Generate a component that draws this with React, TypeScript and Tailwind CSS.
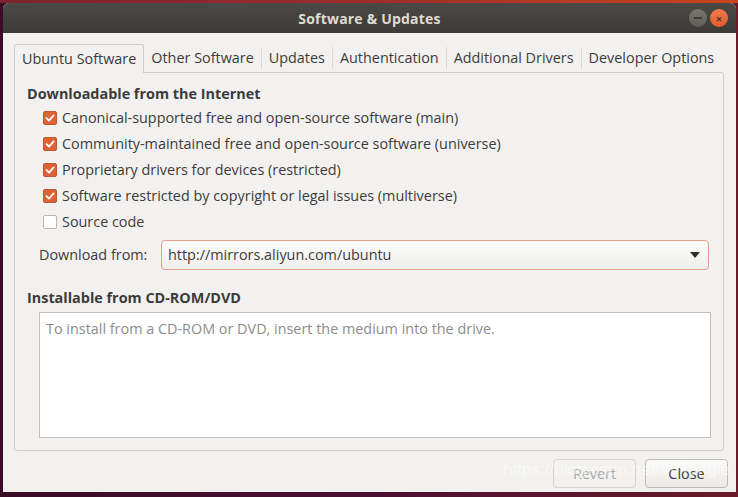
const sources = [
  { label: 'Canonical-supported free and open-source software (main)', checked: true },
  { label: 'Community-maintained free and open-source software (universe)', checked: true },
  { label: 'Proprietary drivers for devices (restricted)', checked: true },
  { label: 'Software restricted by copyright or legal issues (multiverse)', checked: true },
  { label: 'Source code', checked: false },
];

const tabs = ['Ubuntu Software', 'Other Software', 'Updates', 'Authentication', 'Additional Drivers', 'Developer Options'];

function Check({ checked }: { checked: boolean }) {
  if (!checked) {
    return <span className="w-[14px] h-[14px] rounded-[2px] border border-[#b9b6b0] bg-white shrink-0" />;
  }
  return (
    <span className="w-[14px] h-[14px] rounded-[2px] bg-[#dd6235] border border-[#c4562c] flex items-center justify-center shrink-0">
      <svg width="10" height="10" viewBox="0 0 10 10">
        <path d="M1.5 5.2 L4 7.6 L8.6 2.4" fill="none" stroke="white" strokeWidth="1.8" strokeLinecap="round" strokeLinejoin="round" />
      </svg>
    </span>
  );
}

export default function App() {
  return (
    <div
      className="w-[738px] h-[497px] overflow-hidden bg-gradient-to-r from-[#3a0d26] via-[#4a1030] to-[#6b1a2a] flex flex-col"
      style={{ fontFamily: '"Open Sans", "Noto Sans", sans-serif' }}
    >
      <div className="h-[3px] bg-gradient-to-r from-[#7a2230] via-[#a02c28] to-[#c8451f] shrink-0" />
      <div className="ml-[3px] w-[733px] h-[489px] flex flex-col bg-[#f2f1f0] rounded-t-[6px] overflow-hidden relative">
        {/* Title bar */}
        <div className="h-[30px] shrink-0 bg-gradient-to-b from-[#4a4945] to-[#3c3b37] flex items-center justify-center relative">
          <span className="text-[14px] font-bold text-[#dfdbd2] tracking-[0.2px]">Software &amp; Updates</span>
          <div className="absolute right-[8px] top-[6px] flex gap-[3px]">
            <span className="w-[18px] h-[18px] rounded-full bg-gradient-to-b from-[#77766f] to-[#5f5e58] flex items-center justify-center">
              <span className="w-[8px] h-[2px] bg-[#3c3b37]" />
            </span>
            <span className="w-[18px] h-[18px] rounded-full bg-gradient-to-b from-[#f47a4e] to-[#e25a2a] flex items-center justify-center text-[#3c3b37] text-[11px] leading-none font-bold">
              ×
            </span>
          </div>
        </div>

        {/* Tabs */}
        <div className="pt-[10px] px-[11px]">
          <div className="flex items-end h-[29px] text-[14.4px] text-[#3c3c3c] whitespace-nowrap">
            {tabs.map((t, i) =>
              i === 0 ? (
                <div key={t} className="h-[29px] shrink-0 px-[7px] border border-b-0 border-[#cfccc7] rounded-t-[3px] bg-[#f2f1f0] flex items-center relative z-10 -mb-px pb-px">
                  {t}
                </div>
              ) : (
                <div key={t} className="h-[28px] shrink-0 flex items-center">
                  <span className="px-[7px]">{t}</span>
                  {i < tabs.length - 1 && <span className="w-px h-[22px] bg-[#dcd9d4]" />}
                </div>
              ),
            )}
          </div>
          <div className="h-[379px] w-[710px] border border-[#cfccc7] rounded-b-[3px] rounded-tr-[3px] px-[12px] pt-[10px]">
            <div className="text-[14.4px] font-bold text-[#3c3c3c]">Downloadable from the Internet</div>
            <div className="pl-[16px] flex flex-col">
              {sources.map((s) => (
                <div key={s.label} className="h-[26px] flex items-center gap-[5px] text-[14.4px] text-[#3c3c3c]">
                  <Check checked={s.checked} />
                  <span>{s.label}</span>
                </div>
              ))}
            </div>
            <div className="flex items-center mt-[5px] pl-[12px]">
              <span className="text-[14.4px] text-[#3c3c3c] w-[122px]">Download from:</span>
              <div className="flex-1 h-[30px] mr-[2px] rounded-[4px] border border-[#e4a089] bg-gradient-to-b from-[#fbfbfa] to-[#f0efee] flex items-center justify-between px-[6px] text-[14.4px] text-[#3c3c3c]">
                <span>http://mirrors.aliyun.com/ubuntu</span>
                <svg width="10" height="6" viewBox="0 0 10 6" className="mr-[2px]">
                  <path d="M0 0 H10 L5 6 Z" fill="#2e2e2e" />
                </svg>
              </div>
            </div>
            <div className="text-[14.4px] font-bold text-[#3c3c3c] mt-[17px]">Installable from CD-ROM/DVD</div>
            <div className="ml-[12px] mt-[4px] h-[126px] border border-[#c4c1bb] bg-white px-[6px] pt-[5px] text-[14.4px] text-[#8e8d8a]">
              To install from a CD-ROM or DVD, insert the medium into the drive.
            </div>
          </div>
        </div>

        {/* Buttons */}
        <div className="flex justify-end gap-[9px] pr-[8px] pt-[8px]">
          <button className="w-[83px] h-[29px] rounded-[4px] border border-[#d6d3cf] bg-[#f2f1f0] text-[14.4px] text-[#a8a6a3]">Revert</button>
          <button className="w-[83px] h-[29px] rounded-[4px] border border-[#bdbab4] bg-gradient-to-b from-[#fafafa] to-[#eceae7] text-[14.4px] text-[#3c3c3c]">Close</button>
        </div>
        <span className="absolute right-[6px] bottom-[10px] text-[17px] text-white/50 pointer-events-none" style={{ fontFamily: '"Liberation Sans", sans-serif' }}>
          https://blog.csdn.net/MrTangle
        </span>
      </div>
    </div>
  );
}
